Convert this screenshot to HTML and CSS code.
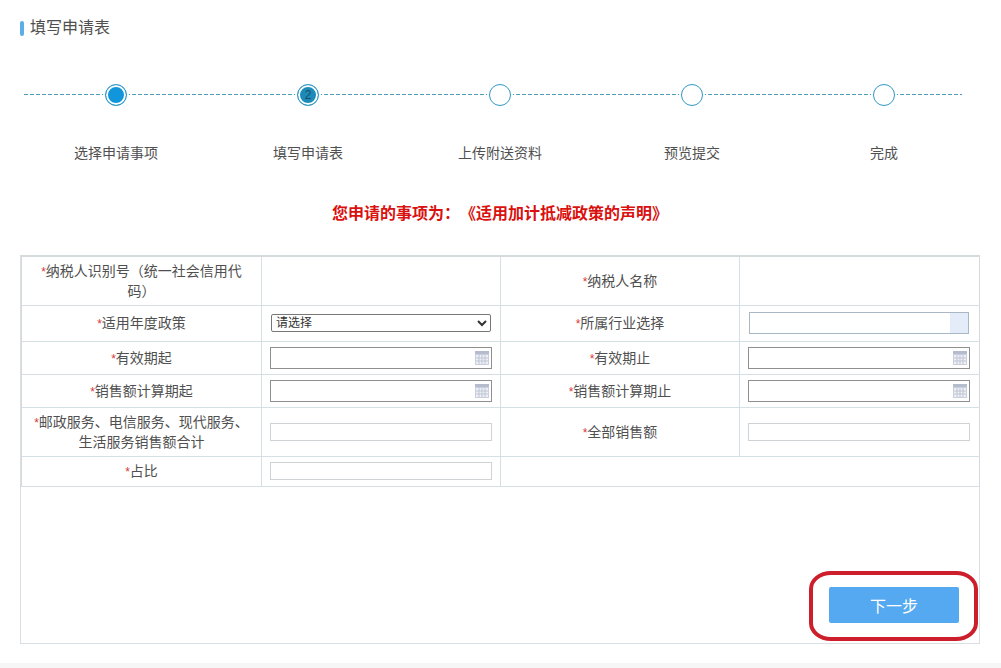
FILE: index.html
```html
<!DOCTYPE html>
<html lang="zh-CN">
<head>
<meta charset="utf-8">
<title>填写申请表</title>
<link rel="stylesheet" href="styles.css">
</head>
<body>
<main class="page">
  <h1 class="title">填写申请表</h1>
  <ol class="steps">
    <li class="step"><span class="dot dot-done"></span><span class="step-label">选择申请事项</span></li>
    <li class="step"><span class="dot dot-current">2</span><span class="step-label">填写申请表</span></li>
    <li class="step"><span class="dot"></span><span class="step-label">上传附送资料</span></li>
    <li class="step"><span class="dot"></span><span class="step-label">预览提交</span></li>
    <li class="step"><span class="dot"></span><span class="step-label">完成</span></li>
  </ol>
  <h2 class="notice">您申请的事项为：《适用加计抵减政策的声明》</h2>
  <section class="panel">
    <table class="form">
      <colgroup><col class="c1"><col class="c2"><col class="c3"><col class="c4"></colgroup>
      <tr class="r-first">
        <th><i>*</i>纳税人识别号（统一社会信用代码）</th><td></td>
        <th><i>*</i>纳税人名称</th><td></td>
      </tr>
      <tr class="r-select">
        <th><i>*</i>适用年度政策</th>
        <td><select class="sel"><option>请选择</option></select></td>
        <th><i>*</i>所属行业选择</th>
        <td><div class="industry"><span class="industry-btn"></span></div></td>
      </tr>
      <tr class="r-date">
        <th><i>*</i>有效期起</th>
        <td><div class="date"><svg class="cal" viewBox="0 0 14 14"><use href="#cal"/></svg></div></td>
        <th><i>*</i>有效期止</th>
        <td><div class="date"><svg class="cal" viewBox="0 0 14 14"><use href="#cal"/></svg></div></td>
      </tr>
      <tr class="r-date">
        <th><i>*</i>销售额计算期起</th>
        <td><div class="date"><svg class="cal" viewBox="0 0 14 14"><use href="#cal"/></svg></div></td>
        <th><i>*</i>销售额计算期止</th>
        <td><div class="date"><svg class="cal" viewBox="0 0 14 14"><use href="#cal"/></svg></div></td>
      </tr>
      <tr class="r-tall">
        <th><i>*</i>邮政服务、电信服务、现代服务、生活服务销售额合计</th>
        <td><input class="text" type="text"></td>
        <th><i>*</i>全部销售额</th>
        <td><input class="text" type="text"></td>
      </tr>
      <tr class="r-last">
        <th><i>*</i>占比</th>
        <td><input class="text" type="text"></td>
        <td colspan="2"></td>
      </tr>
    </table>
    <div class="actions"><button class="next" type="button">下一步</button></div>
    <div class="mark"></div>
  </section>
</main>
<div class="foot"></div>
<svg class="defs" width="0" height="0">
  <symbol id="cal" viewBox="0 0 14 14">
    <rect x="0" y="0" width="14" height="14" fill="#c9cfdc"/>
    <rect x="0" y="0" width="14" height="3" fill="#b4bccd"/>
    <rect x="1" y="4" width="12" height="9" fill="#eef0f6"/>
    <path d="M1 7h12M1 10h12M4 4v9M7 4v9M10 4v9" stroke="#bfc5d4" stroke-width="1" fill="none"/>
  </symbol>
</svg>
</body>
</html>
```
FILE: styles.css
```css
* { box-sizing: border-box; }
html, body { margin: 0; height: 668px; overflow: hidden; background: #fff; }
body {
  font-family: "Liberation Sans", "Noto Sans CJK SC", sans-serif;
  font-size: 14px;
  color: #505050;
  text-spacing-trim: space-all;
  display: flex;
  flex-direction: column;
}
.page { height: 663px; padding: 0 21px 0 20px; }
.title {
  margin: 0;
  padding: 18px 0 0 10px;
  height: 70px;
  font-size: 16px;
  font-weight: 400;
  line-height: 20px;
  position: relative;
}
.title::before {
  content: "";
  position: absolute;
  left: 0;
  top: 21px;
  width: 4px;
  height: 15px;
  border-radius: 2px;
  background: #5dade6;
}
.steps {
  list-style: none;
  margin: 0;
  padding: 0;
  display: grid;
  grid-template-columns: repeat(5, 192px);
  position: relative;
  height: 127px;
}
.steps::before {
  content: "";
  position: absolute;
  left: 4px;
  width: 938px;
  top: 24px;
  height: 1px;
  background: repeating-linear-gradient(90deg, #4f9dbd 0 4px, transparent 4px 6px);
}
.step {
  display: flex;
  flex-direction: column;
  align-items: center;
  padding-top: 14px;
  position: relative;
}
.dot {
  width: 22px;
  height: 22px;
  border-radius: 50%;
  border: 1px solid #2f9ac6;
  background: #fff;
  box-shadow: 0 0 0 2px #fff;
  font-size: 12px;
  line-height: 20px;
  text-align: center;
  color: #1a4f66;
}
.dot-done { background: #1296db; box-shadow: inset 0 0 0 2px #fff, 0 0 0 2px #fff; }
.dot-current { background: #1c8bb9; box-shadow: inset 0 0 0 2px #fff, 0 0 0 2px #fff; }
.step-label { margin-top: 37px; line-height: 20px; white-space: nowrap; }
.notice {
  margin: 0;
  height: 58px;
  padding-top: 5px;
  font-size: 16px;
  line-height: 24px;
  font-weight: 700;
  color: #d9110f;
  text-align: center;
  width: 960px;
}
.panel {
  position: relative;
  width: 960px;
  height: 389px;
  border: 1px solid #d9dfe2;
  border-top: 2px solid #d5dadd;
  background: #fff;
}
.form {
  width: 958px;
  table-layout: fixed;
  border-collapse: collapse;
}
.c1 { width: 240px; }
.c2 { width: 239px; }
.c3 { width: 239px; }
.c4 { width: 240px; }
.form th, .form td {
  border: 1px solid #d4e0e6;
  padding: 0 0 0 8px;
  vertical-align: middle;
}
.form tr:first-child th, .form tr:first-child td { border-top: 0; }
.form th {
  padding: 2px 8px 0;
  font-weight: 400;
  line-height: 19px;
  text-align: center;
}
.form th:first-child { border-left-color: #d5dadd; }
.form tr > :last-child { border-right-color: #d5dadd; }
.form i { font-style: normal; font-size: 12px; color: #d9373a; }
.r-first { height: 48px; }
.r-tall { height: 49px; }
.r-select { height: 36px; }
.r-date { height: 33px; }
.r-last { height: 30px; }
.sel {
  display: block;
  width: 220px;
  height: 18px;
  margin-left: 1px;
  padding: 0;
  font: 12px "Liberation Sans", "Noto Sans CJK SC", sans-serif;
  color: #333;
  background: #fff;
  border: 1px solid #777;
  border-radius: 2px;
}
.industry {
  width: 220px;
  height: 22px;
  margin-left: 1px;
  display: flex;
  justify-content: flex-end;
  border: 1px solid #aab8c6;
  background: #fff;
}
.industry-btn { width: 18px; background: #e4ecfa; }
.date {
  position: relative;
  width: 222px;
  height: 22px;
  border: 1px solid #8f8f8f;
  background: #fff;
}
.cal {
  position: absolute;
  right: 2px;
  top: 3px;
  width: 14px;
  height: 14px;
}
.text {
  display: block;
  width: 222px;
  height: 18px;
  padding: 0;
  border: 1px solid #cfd3d6;
  background: #fff;
}
.actions {
  position: absolute;
  right: 20px;
  bottom: 20px;
  display: flex;
}
.next {
  width: 130px;
  height: 36px;
  border: 0;
  border-radius: 2px;
  background: #55a9f0;
  color: #fff;
  font: 16px "Liberation Sans", "Noto Sans CJK SC", sans-serif;
}
.mark {
  position: absolute;
  left: 788px;
  top: 314px;
  width: 169px;
  height: 70px;
  border: 4px solid #cc1f2b;
  border-radius: 22px / 18px;
  pointer-events: none;
}
.foot { height: 5px; background: #f6f6f6; }
.defs { position: absolute; }
```
